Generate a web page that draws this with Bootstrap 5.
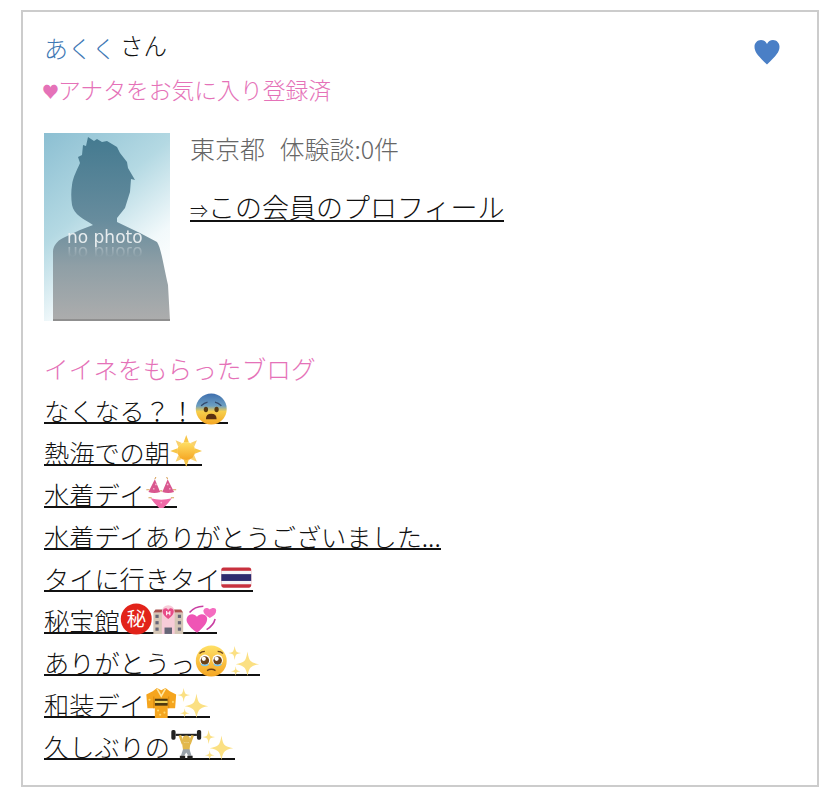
<!DOCTYPE html>
<html lang="ja"><head><meta charset="utf-8"><title>会員</title>
<link href="https://cdn.jsdelivr.net/npm/bootstrap@5.3.0/dist/css/bootstrap.min.css" rel="stylesheet">
<style>
html,body{background:#fff;height:100%}
body{font-family:"Noto Sans CJK JP",sans-serif;font-weight:300;color:#222;padding:10px 21px 11px 21px;overflow:hidden}
.member-box{border:2px solid #ccc;height:777px;padding:18px 21px 0 21px;position:relative}
.name-line{font-size:23.5px;line-height:30px;color:#111}
.name-link{font-size:24px;color:#3f79b5;text-decoration:none;margin-right:4px;position:relative;top:3px}
.fav-line{font-size:22.8px;line-height:34px;margin-top:13px;color:#e572b8;white-space:nowrap;display:flex;align-items:center}
.fav-mark{font-size:17px;line-height:1;font-weight:400;margin-left:-2px;margin-right:-1px}
.fav-heart{position:absolute;right:36px;top:26px;width:28px;height:28px}
.profile-row{margin-top:26px;gap:20px}
.photo-frame{width:126px;height:188px;flex:none;position:relative;overflow:hidden}
.photo{width:126px;height:188px;display:block}
.photo-label{position:absolute;left:23px;top:94px;font-family:"DejaVu Sans",sans-serif;font-weight:400;font-size:17px;line-height:20px;color:#f1f4f5;white-space:nowrap;opacity:.92;-webkit-box-reflect:below -4px linear-gradient(transparent 30%,rgba(255,255,255,.55))}
.meta-line{font-size:25px;line-height:34px;color:#666;white-space:nowrap;margin-top:-2px;word-spacing:-.7px}
.prof-link{display:block;height:28px;font-size:27px;line-height:26px;margin-top:29px;color:#111;text-decoration:none;border-bottom:2px solid #111;white-space:nowrap}
.prof-arrow{font-size:18px}
.blog-head{font-size:24.700px;line-height:34px;color:#e572b8;margin-top:30px}
.blog-list{margin:13px 0 0;padding:0;list-style:none}
.blog-list li{height:42px}
.blog-link{display:inline-flex;align-items:center;height:26px;font-size:25.200px;line-height:24px;color:#111;text-decoration:none;border-bottom:2px solid #111;white-space:nowrap}
.emo{width:32.500px;height:32px;margin:-5px 0 -3px;flex:none;display:block}
</style></head><body>
<svg width="0" height="0" class="position-absolute">
<defs>
<linearGradient id="faceG" x1="0" y1="0" x2="0" y2="1"><stop offset="0" stop-color="#ffe066"/><stop offset="1" stop-color="#f5a623"/></linearGradient>
<linearGradient id="fearG" x1="0" y1="0" x2="0" y2="1"><stop offset="0" stop-color="#3f6fae"/><stop offset=".4" stop-color="#6c9fc2"/><stop offset=".58" stop-color="#f6cf4c"/><stop offset="1" stop-color="#f5a623"/></linearGradient>
<symbol id="e-fear" viewBox="0 0 30 30"><circle cx="15" cy="15" r="14.500" fill="url(#fearG)"/><ellipse cx="10" cy="15.500" rx="2" ry="2.600" fill="#5a3a10"/><ellipse cx="20" cy="15.500" rx="2" ry="2.600" fill="#5a3a10"/><path d="M5.500 12q3-3 6-3.500M24.500 12q-3-3-6-3.500" stroke="#33496b" stroke-width="1.200" fill="none"/><path d="M10 24.500q0-5 5-5t5 5z" fill="#5a3010"/></symbol>
<symbol id="e-sun" viewBox="0 0 30 30"><g fill="#f7c64a"><path d="M15 0l2.500 7h-5zM15 30l-2.500-7h5zM0 15l7-2.500v5zM30 15l-7 2.500v-5z"/><path d="M5 5l6 2.500-3.500 3.500zM25 5l-2.500 6-3.500-3.500zM5 25l2.500-6 3.500 3.500zM25 25l-6-2.500 3.500-3.500z" opacity=".8"/></g><circle cx="15" cy="15" r="8.500" fill="url(#faceG)"/></symbol>
<symbol id="e-bikini" viewBox="0 0 30 30"><path d="M9 2L3 14q5.500 2 11 0zM21 2l-5 12q5.500 2 11 0z" fill="#d9578f"/><path d="M1 12l3 0M14 13h2M26 12l3 0" stroke="#d6a25a" stroke-width="1" fill="none"/><path d="M9 2l1-2M21 2l-1-2" stroke="#d6a25a" stroke-width="1"/><path d="M5 20q10 2.500 20 0-3.500 5-8 9h-4q-4.500-4-8-9z" fill="#f06aa8"/><path d="M3 19.500h3M24 19.500h3" stroke="#d6a25a" stroke-width="1"/><g fill="#f6b5d3"><circle cx="8" cy="11" r=".8"/><circle cx="10" cy="7" r=".8"/><circle cx="21" cy="7" r=".8"/><circle cx="23" cy="11" r=".8"/><circle cx="15" cy="24" r=".8"/></g></symbol>
<symbol id="e-flag" viewBox="0 0 30 30"><rect x="1" y="6" width="28" height="19" rx="2" fill="#c8313e"/><rect x="1" y="9.200" width="28" height="12.600" fill="#f4f5f8"/><rect x="1" y="12.300" width="28" height="6.400" fill="#2d2a6e"/></symbol>
<symbol id="e-secret" viewBox="0 0 30 30"><circle cx="15" cy="15" r="14.500" fill="#e2231a"/><text x="15" y="21.500" font-size="18" font-weight="400" text-anchor="middle" fill="#fff" font-family="Noto Sans CJK JP">秘</text></symbol>
<symbol id="e-hotel" viewBox="0 0 30 30"><path d="M1 9h28v20H1z" fill="#d5c6b6"/><path d="M1 9l2-3h8v3zM29 9l-2-3h-8v3z" fill="#a9534e"/><path d="M9 8a6 6 0 0 1 12 0v21H9z" fill="#f7ccd8"/><path d="M15 15c-6-4-6-8-4-9.500 1.500-1 3-.5 4 1 1-1.500 2.500-2 4-1 2 1.500 2 5.500-4 9.500z" fill="#e84c88"/><path d="M13.500 7.500v4M16.500 7.500v4M13.500 9.500h3" stroke="#fff" stroke-width="1"/><g fill="#667"><rect x="3" y="11" width="3" height="3"/><rect x="3" y="17" width="3" height="3"/><rect x="24" y="11" width="3" height="3"/><rect x="24" y="17" width="3" height="3"/><rect x="11.500" y="23" width="7" height="6"/><rect x="3" y="23" width="3" height="3"/><rect x="24" y="23" width="3" height="3"/></g></symbol>
<symbol id="e-hearts" viewBox="0 0 30 30"><path d="M11 28C2 21 .5 17 1.500 14c1-4 7-5 9.500-1 2-4 9-3 9.500 1 .5 4-2.500 8-9.500 14z" fill="#ef55b5"/><path d="M23 14c-5-3-6-5-6-7 1-3 4-3 6-1 2-2 6-2 6 1 0 3-2 5-6 7z" fill="#f56cc0"/><path d="M4 9c4-5 9-6 13-6M28 15c-1 4-3 7-8 10" stroke="#c93fa2" stroke-width="1.500" fill="none"/></symbol>
<symbol id="e-plead" viewBox="0 0 30 30"><circle cx="15" cy="15" r="14.500" fill="url(#faceG)"/><circle cx="9" cy="14" r="5" fill="#fff"/><circle cx="21" cy="14" r="5" fill="#fff"/><circle cx="9" cy="14.500" r="4" fill="#6b431a"/><circle cx="21" cy="14.500" r="4" fill="#6b431a"/><circle cx="8" cy="13" r="2" fill="#fff"/><circle cx="20" cy="13" r="2" fill="#fff"/><path d="M9 6q-3 0-5 2M21 6q3 0 5 2M11 24q4-2.500 8 0" stroke="#6b431a" stroke-width="1.200" fill="none"/><path d="M5.500 18q3.500 2.500 7 0M24.500 18q-3.500 2.500-7 0" stroke="#7cc8ee" stroke-width="1.500" fill="none"/></symbol>
<symbol id="e-spark" viewBox="0 0 30 30"><g fill="#fbe083"><path d="M18 6q1 7 3 9 2 2 8 3-6 1-8 3-2 2-3 8-1-6-3-8t-8-3q6-1 8-3t3-9z"/><path d="M6 1q.6 4 1.500 5 1 1 4.500 1.500-3.500.5-4.500 1.500Q6.600 10 6 14q-.6-4-1.500-5Q3.500 8 0 7.500 3.500 7 4.500 6 5.400 5 6 1z"/><path d="M7 20q.4 3 1 3.500.7.7 3.500 1-2.800.3-3.500 1-.6.500-1 3.500-.4-3-1-3.500-.7-.7-3.500-1 2.800-.3 3.500-1 .6-.5 1-3.500z"/></g></symbol>
<symbol id="e-kimono" viewBox="0 0 30 30"><path d="M15 3l-4-2-4 3-6 3 1 13 7 0 0 9h12l0-9 7 0 1-13-6-3-4-3z" fill="#f5a51e"/><path d="M8 20V9M22 20V9" stroke="#d98a12" stroke-width="1"/><rect x="9" y="11" width="12" height="6.500" fill="#4f3a10"/><rect x="9" y="13" width="12" height="2" fill="#f1d25a"/><path d="M11 1.500l4 7 4-7" stroke="#fde6a0" stroke-width="1.500" fill="none"/><g fill="#ffd76a"><circle cx="12" cy="22" r="1"/><circle cx="18" cy="24" r="1"/><circle cx="14" cy="26" r="1"/><circle cx="4" cy="12" r="1"/><circle cx="26" cy="14" r="1"/></g></symbol>
<symbol id="e-lift" viewBox="0 0 30 30"><g fill="#222"><rect x="1" y="1" width="4" height="9" rx="1.500"/><rect x="25" y="1" width="4" height="9" rx="1.500"/><rect x="5" y="4.500" width="20" height="2"/></g><g stroke="#e2b84d" stroke-width="2.500" fill="none"><path d="M9 6l3 8M21 6l-3 8"/></g><circle cx="15" cy="9.500" r="3.500" fill="#e2b84d"/><path d="M11 13h8l-1 7h-6z" fill="#e2b84d"/><path d="M12 19h6l2 6h-3l-2-3-2 3h-3z" fill="#9aa3ab"/><path d="M9 25h5v3H9zM16 25h5v3h-5z" fill="#222"/></symbol>
<linearGradient id="bg" x1="0" y1="0" x2=".55" y2="1"><stop offset="0" stop-color="#8cbfd2"/><stop offset=".45" stop-color="#b4d9e3"/><stop offset=".8" stop-color="#f2f9fb"/><stop offset="1" stop-color="#fff"/></linearGradient>
<linearGradient id="man" x1="0" y1="0" x2="0" y2="1"><stop offset="0" stop-color="#447a90"/><stop offset=".45" stop-color="#678c9d"/><stop offset=".7" stop-color="#8f9fa6"/><stop offset="1" stop-color="#adadad"/></linearGradient>
</defs></svg>
<div class="member-box">
<svg class="fav-heart" viewBox="0 0 28 28" aria-hidden="true"><path d="M14 26.500C5 18 1.500 14 1.500 8.800 1.500 4.800 4.500 2 8 2c2.700 0 4.800 1.500 6 4 1.200-2.500 3.300-4 6-4 3.500 0 6.500 2.800 6.500 6.800 0 5.200-3.500 9.200-12.500 17.700z" fill="#4a7fc6"/></svg>
<div class="name-line"><a class="name-link" href="#">あくく</a>さん</div>
<div class="fav-line"><span class="fav-mark">♥</span><span>アナタをお気に入り登録済</span></div>
<div class="d-flex profile-row">
<div class="photo-frame">
<svg class="photo" viewBox="0 0 126 188" aria-hidden="true">
<rect width="126" height="188" fill="url(#bg)"/>
<path d="M9 188V119C9 113 13 108 19 105L36 97L49 92C40 86 30 82 28 72C27 65 27 58 28 52C29 44 33 37 36 30L34 24L38 22L39 12L42 13L44 4L50 8L53 6L58 9L63 8L73 14L76 20L83 29L84 35L91 47L87 46L86 59L81 75L73 85L73 89L96 100L113 109C117 115 119 130 124 152L126 188Z" fill="url(#man)"/>
<rect x="9" y="186" width="117" height="2" fill="#8f8f8f"/>
</svg>
<div class="photo-label">no photo</div>
</div>
<div class="d-flex flex-column align-items-start">
<div class="meta-line">東京都&nbsp;&nbsp;&nbsp;体験談:0件</div>
<a class="prof-link" href="#"><span class="prof-arrow">⇒</span>この会員のプロフィール</a>
</div>
</div>
<div class="blog-head">イイネをもらったブログ</div>
<ul class="blog-list">
<li><a class="blog-link" href="#">なくなる？！<svg class="emo"><use href="#e-fear"/></svg></a></li>
<li><a class="blog-link" href="#">熱海での朝<svg class="emo"><use href="#e-sun"/></svg></a></li>
<li><a class="blog-link" href="#">水着デイ<svg class="emo"><use href="#e-bikini"/></svg></a></li>
<li><a class="blog-link" href="#">水着デイありがとうございました...</a></li>
<li><a class="blog-link" href="#">タイに行きタイ<svg class="emo"><use href="#e-flag"/></svg></a></li>
<li><a class="blog-link" href="#">秘宝館<svg class="emo"><use href="#e-secret"/></svg><svg class="emo"><use href="#e-hotel"/></svg><svg class="emo"><use href="#e-hearts"/></svg></a></li>
<li><a class="blog-link" href="#">ありがとうっ<svg class="emo"><use href="#e-plead"/></svg><svg class="emo"><use href="#e-spark"/></svg></a></li>
<li><a class="blog-link" href="#">和装デイ<svg class="emo"><use href="#e-kimono"/></svg><svg class="emo"><use href="#e-spark"/></svg></a></li>
<li><a class="blog-link" href="#">久しぶりの<svg class="emo"><use href="#e-lift"/></svg><svg class="emo"><use href="#e-spark"/></svg></a></li>
</ul>
</div>
</body></html>
